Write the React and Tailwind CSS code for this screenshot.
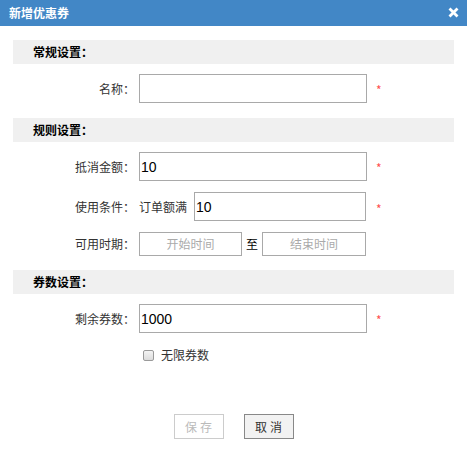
import React from 'react'

const cjk = { fontFamily: '"Microsoft YaHei", "Noto Sans CJK SC", sans-serif' }

const Section = ({ title, className }) => (
  <div className={"mx-[13px] h-6 bg-[#f0f0f0] flex items-center pl-5 text-xs font-bold text-black " + className}>
    {title}
  </div>
)

const Label = ({ children }) => (
  <div className="w-[126px] shrink-0 text-right text-xs text-[#333] pr-[4px]">{children}</div>
)

const Star = () => <span className="ml-[9px] text-[12px] leading-none text-[#ff4f4f] pt-[2px]">*</span>

const TextInput = ({ value, className }) => (
  <input
    readOnly
    defaultValue={value}
    className={"h-[29px] border border-[#a9a9a9] bg-white px-[1px] text-[14px] text-black outline-none " + className}
    style={{ fontFamily: '"Liberation Sans", Arial, sans-serif' }}
  />
)

export default function App() {
  return (
    <div className="w-[467px] h-[451px] bg-white relative" style={cjk}>
      {/* title bar */}
      <div className="h-[26px] bg-[#4287c6] flex items-center justify-between pl-[9px] pr-[8px]">
        <span className="text-white text-xs font-bold">新增优惠券</span>
        <svg width="11" height="11" viewBox="0 0 11 11" className="mb-[2px]">
          <path d="M1.5 1.5 L9.5 9.5 M9.5 1.5 L1.5 9.5" stroke="#fff" strokeWidth="2.8" />
        </svg>
      </div>

      <Section title="常规设置：" className="mt-[14px]" />
      <div className="flex items-center mt-[10px] ml-[13px]">
        <Label>名称：</Label>
        <TextInput className="w-[228px]" />
        <Star />
      </div>

      <Section title="规则设置：" className="mt-[15px]" />
      <div className="flex items-center mt-[10px] ml-[13px]">
        <Label>抵消金额：</Label>
        <TextInput value="10" className="w-[228px]" />
        <Star />
      </div>
      <div className="flex items-center mt-[11px] ml-[13px]">
        <Label>使用条件：</Label>
        <span className="text-xs text-[#333] w-[55px]">订单额满</span>
        <TextInput value="10" className="w-[172px]" />
        <span className="ml-px"><Star /></span>
      </div>
      <div className="flex items-center mt-[11px] ml-[13px]">
        <Label>可用时期：</Label>
        <div className="w-[103px] h-6 border border-[#a9a9a9] flex items-center justify-center text-xs text-[#aaa]">开始时间</div>
        <span className="w-[20px] text-center text-xs text-black">至</span>
        <div className="w-[104px] h-6 border border-[#a9a9a9] flex items-center justify-center text-xs text-[#aaa]">结束时间</div>
      </div>

      <Section title="券数设置：" className="mt-[14px]" />
      <div className="flex items-center mt-[10px] ml-[13px]">
        <Label>剩余券数：</Label>
        <TextInput value="1000" className="w-[228px]" />
        <Star />
      </div>
      <div className="flex items-center mt-[14px] ml-[143px] gap-[7px]">
        <span className="w-[11px] h-[11px] rounded-[2px] border border-[#9a9a9a] bg-gradient-to-b from-[#f4f4f4] to-[#dcdcdc]" />
        <span className="text-xs text-[#333]">无限券数</span>
      </div>

      <div className="flex justify-center gap-5 mt-[51px]">
        <button className="w-[50px] h-[25px] border border-[#cccccc] bg-white text-xs text-[#bbb] tracking-[3px] pl-[3px]">保存</button>
        <button className="w-[50px] h-[25px] border border-[#888] bg-[#f2f2f2] text-xs text-[#333] tracking-[3px] pl-[3px]">取消</button>
      </div>
    </div>
  )
}
